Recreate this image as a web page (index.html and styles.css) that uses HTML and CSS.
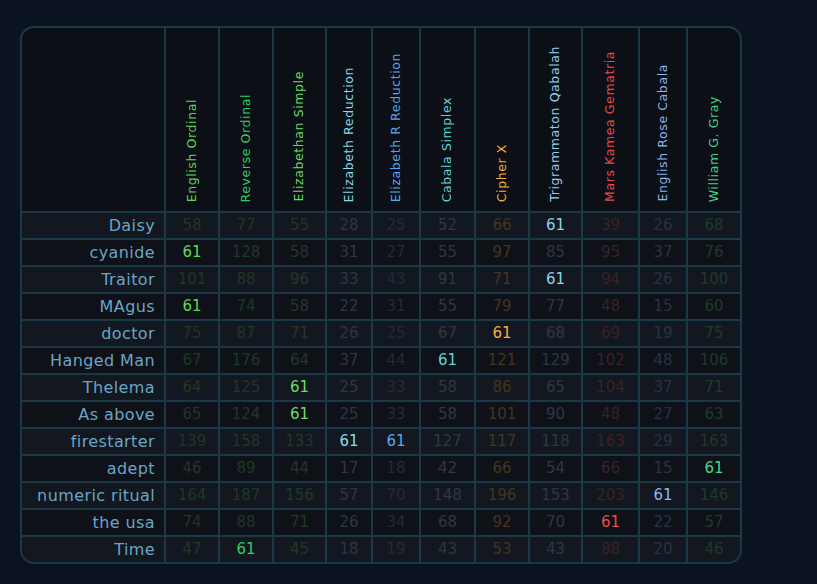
FILE: index.html
```html
<!DOCTYPE html>
<html>
<head>
<meta charset="utf-8">
<link rel="stylesheet" href="styles.css">
</head>
<body>
<div class="grid">
  <div class="hd corner"></div>
  <div class="hd"><span class="vt c1">English Ordinal</span></div>
  <div class="hd"><span class="vt c2">Reverse Ordinal</span></div>
  <div class="hd"><span class="vt c3">Elizabethan Simple</span></div>
  <div class="hd"><span class="vt c4">Elizabeth Reduction</span></div>
  <div class="hd"><span class="vt c5">Elizabeth R Reduction</span></div>
  <div class="hd"><span class="vt c6">Cabala Simplex</span></div>
  <div class="hd"><span class="vt c7">Cipher X</span></div>
  <div class="hd"><span class="vt c8">Trigrammaton Qabalah</span></div>
  <div class="hd"><span class="vt c9">Mars Kamea Gematria</span></div>
  <div class="hd"><span class="vt c10">English Rose Cabala</span></div>
  <div class="hd"><span class="vt c11">William G. Gray</span></div>

  <div class="lbl odd">Daisy</div>
  <div class="n odd d1">58</div><div class="n odd d2">77</div><div class="n odd d3">55</div><div class="n odd d4">28</div><div class="n odd d5">25</div><div class="n odd d6">52</div><div class="n odd d7">66</div><div class="n odd c8">61</div><div class="n odd d9">39</div><div class="n odd d10">26</div><div class="n odd d11">68</div>

  <div class="lbl even">cyanide</div>
  <div class="n even c1">61</div><div class="n even d2">128</div><div class="n even d3">58</div><div class="n even d4">31</div><div class="n even d5">27</div><div class="n even d6">55</div><div class="n even d7">97</div><div class="n even d8">85</div><div class="n even d9">95</div><div class="n even d10">37</div><div class="n even d11">76</div>

  <div class="lbl odd">Traitor</div>
  <div class="n odd d1">101</div><div class="n odd d2">88</div><div class="n odd d3">96</div><div class="n odd d4">33</div><div class="n odd d5">43</div><div class="n odd d6">91</div><div class="n odd d7">71</div><div class="n odd c8">61</div><div class="n odd d9">94</div><div class="n odd d10">26</div><div class="n odd d11">100</div>

  <div class="lbl even">MAgus</div>
  <div class="n even c1">61</div><div class="n even d2">74</div><div class="n even d3">58</div><div class="n even d4">22</div><div class="n even d5">31</div><div class="n even d6">55</div><div class="n even d7">79</div><div class="n even d8">77</div><div class="n even d9">48</div><div class="n even d10">15</div><div class="n even d11">60</div>

  <div class="lbl odd">doctor</div>
  <div class="n odd d1">75</div><div class="n odd d2">87</div><div class="n odd d3">71</div><div class="n odd d4">26</div><div class="n odd d5">25</div><div class="n odd d6">67</div><div class="n odd c7">61</div><div class="n odd d8">68</div><div class="n odd d9">69</div><div class="n odd d10">19</div><div class="n odd d11">75</div>

  <div class="lbl even">Hanged Man</div>
  <div class="n even d1">67</div><div class="n even d2">176</div><div class="n even d3">64</div><div class="n even d4">37</div><div class="n even d5">44</div><div class="n even c6">61</div><div class="n even d7">121</div><div class="n even d8">129</div><div class="n even d9">102</div><div class="n even d10">48</div><div class="n even d11">106</div>

  <div class="lbl odd">Thelema</div>
  <div class="n odd d1">64</div><div class="n odd d2">125</div><div class="n odd c3">61</div><div class="n odd d4">25</div><div class="n odd d5">33</div><div class="n odd d6">58</div><div class="n odd d7">86</div><div class="n odd d8">65</div><div class="n odd d9">104</div><div class="n odd d10">37</div><div class="n odd d11">71</div>

  <div class="lbl even">As above</div>
  <div class="n even d1">65</div><div class="n even d2">124</div><div class="n even c3">61</div><div class="n even d4">25</div><div class="n even d5">33</div><div class="n even d6">58</div><div class="n even d7">101</div><div class="n even d8">90</div><div class="n even d9">48</div><div class="n even d10">27</div><div class="n even d11">63</div>

  <div class="lbl odd">firestarter</div>
  <div class="n odd d1">139</div><div class="n odd d2">158</div><div class="n odd d3">133</div><div class="n odd c4">61</div><div class="n odd c5">61</div><div class="n odd d6">127</div><div class="n odd d7">117</div><div class="n odd d8">118</div><div class="n odd d9">163</div><div class="n odd d10">29</div><div class="n odd d11">163</div>

  <div class="lbl even">adept</div>
  <div class="n even d1">46</div><div class="n even d2">89</div><div class="n even d3">44</div><div class="n even d4">17</div><div class="n even d5">18</div><div class="n even d6">42</div><div class="n even d7">66</div><div class="n even d8">54</div><div class="n even d9">66</div><div class="n even d10">15</div><div class="n even c11">61</div>

  <div class="lbl odd">numeric ritual</div>
  <div class="n odd d1">164</div><div class="n odd d2">187</div><div class="n odd d3">156</div><div class="n odd d4">57</div><div class="n odd d5">70</div><div class="n odd d6">148</div><div class="n odd d7">196</div><div class="n odd d8">153</div><div class="n odd d9">203</div><div class="n odd c10">61</div><div class="n odd d11">146</div>

  <div class="lbl even">the usa</div>
  <div class="n even d1">74</div><div class="n even d2">88</div><div class="n even d3">71</div><div class="n even d4">26</div><div class="n even d5">34</div><div class="n even d6">68</div><div class="n even d7">92</div><div class="n even d8">70</div><div class="n even c9">61</div><div class="n even d10">22</div><div class="n even d11">57</div>

  <div class="lbl odd">Time</div>
  <div class="n odd d1">47</div><div class="n odd c2">61</div><div class="n odd d3">45</div><div class="n odd d4">18</div><div class="n odd d5">19</div><div class="n odd d6">43</div><div class="n odd d7">53</div><div class="n odd d8">43</div><div class="n odd d9">88</div><div class="n odd d10">20</div><div class="n odd d11">46</div>
</div>
</body>
</html>
```

FILE: styles.css
```css
html, body {
  margin: 0;
  padding: 0;
  background: #0b1220;
}
body {
  padding: 26px 0 0 20px;
  font-family: "DejaVu Sans", sans-serif;
}
.grid {
  display: inline-grid;
  grid-template-columns: 142px 52px 52px 51px 44px 46px 53px 52px 51px 55px 46px 52px;
  grid-template-rows: 183px;
  grid-auto-rows: 25px;
  gap: 2px;
  background: #1a3846;
  border: 2px solid #1a3846;
  border-radius: 14px;
  overflow: hidden;
}
.hd {
  background: #0c0f16;
  display: flex;
  align-items: flex-end;
  justify-content: center;
  padding-bottom: 9px;
  box-sizing: border-box;
}
.vt {
  writing-mode: vertical-rl;
  transform: rotate(180deg);
  font-size: 12.5px;
  letter-spacing: 0.6px;
  line-height: 1;
}
.lbl {
  color: #6aa5c6;
  font-size: 16px;
  letter-spacing: 0.4px;
  text-align: right;
  padding-right: 9px;
  line-height: 25px;
  white-space: nowrap;
}
.n {
  font-size: 15px;
  text-align: center;
  line-height: 25px;
}
.odd { background: #13171f; }
.even { background: #0e1118; }

.c1 { color: #5cd75a; }
.c2 { color: #2ecf68; }
.c3 { color: #68de64; }
.c4 { color: #86dce4; }
.c5 { color: #5aa6ea; }
.c6 { color: #5ed6d2; }
.c7 { color: #f6ad3c; }
.c8 { color: #8cd2ee; }
.c9 { color: #e84b4b; }
.c10 { color: #8ab6ec; }
.c11 { color: #43d686; }

.d1 { color: #1f3826; }
.d2 { color: #1e3827; }
.d3 { color: #223828; }
.d4 { color: #2a3843; }
.d5 { color: #1f2b3a; }
.d6 { color: #2a3a43; }
.d7 { color: #433520; }
.d8 { color: #2a3946; }
.d9 { color: #3a2226; }
.d10 { color: #273344; }
.d11 { color: #1f3a2c; }
```
